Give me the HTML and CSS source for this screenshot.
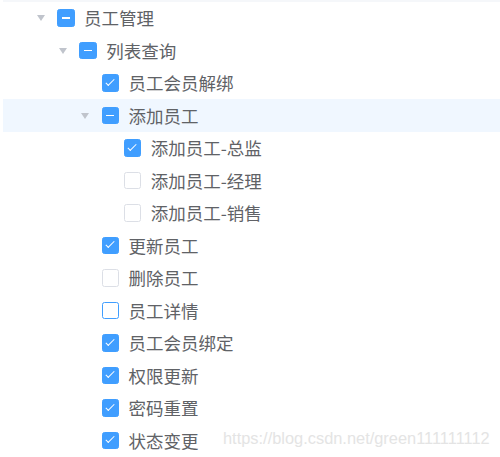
FILE: index.html
```html
<!DOCTYPE html>
<html lang="zh-CN">
<head>
<meta charset="utf-8">
<title>员工管理</title>
<link rel="stylesheet" href="styles.css">
</head>
<body>
<div class="tree">
  <div class="strip"></div>
  <div class="node lv1"><span class="caret"></span><span class="cb ind"></span><span class="label">员工管理</span></div>
  <div class="node lv2"><span class="caret"></span><span class="cb ind"></span><span class="label">列表查询</span></div>
  <div class="node lv3"><span class="caret none"></span><span class="cb on"></span><span class="label">员工会员解绑</span></div>
  <div class="node lv3 current"><span class="caret"></span><span class="cb ind"></span><span class="label">添加员工</span></div>
  <div class="node lv4"><span class="caret none"></span><span class="cb on"></span><span class="label">添加员工-总监</span></div>
  <div class="node lv4"><span class="caret none"></span><span class="cb"></span><span class="label">添加员工-经理</span></div>
  <div class="node lv4"><span class="caret none"></span><span class="cb"></span><span class="label">添加员工-销售</span></div>
  <div class="node lv3"><span class="caret none"></span><span class="cb on"></span><span class="label">更新员工</span></div>
  <div class="node lv3"><span class="caret none"></span><span class="cb"></span><span class="label">删除员工</span></div>
  <div class="node lv3"><span class="caret none"></span><span class="cb focus"></span><span class="label">员工详情</span></div>
  <div class="node lv3"><span class="caret none"></span><span class="cb on"></span><span class="label">员工会员绑定</span></div>
  <div class="node lv3"><span class="caret none"></span><span class="cb on"></span><span class="label">权限更新</span></div>
  <div class="node lv3"><span class="caret none"></span><span class="cb on"></span><span class="label">密码重置</span></div>
  <div class="node lv3"><span class="caret none"></span><span class="cb on"></span><span class="label">状态变更</span></div>
</div>
<div class="watermark">https://blog.csdn.net/green111111112</div>
</body>
</html>
```
FILE: styles.css
```css
html, body {
  margin: 0;
  padding: 0;
  background: #ffffff;
}
body {
  width: 500px;
  height: 457px;
  overflow: hidden;
  position: relative;
  font-family: "Noto Sans CJK SC", "Noto Sans", sans-serif;
}
.tree {
  margin-left: 3px;
}
.strip {
  height: 1.5px;
  background: #f5f7fa;
}
.node {
  display: flex;
  align-items: center;
  height: 32.5px;
  color: #606266;
  font-size: 17.5px;
}
.node.current {
  background: #f0f7ff;
}
.lv1 { padding-left: 21px; }
.lv2 { padding-left: 43.3px; }
.lv3 { padding-left: 65.6px; }
.lv4 { padding-left: 87.8px; }
.caret {
  width: 33px;
  height: 32.5px;
  display: flex;
  align-items: center;
  justify-content: center;
  flex: none;
}
.caret::before {
  content: "";
  display: block;
  width: 0;
  height: 0;
  border-left: 4.5px solid transparent;
  border-right: 4.5px solid transparent;
  border-top: 6px solid #c0c4cc;
  margin-top: 1px;
}
.caret.none::before {
  display: none;
}
.cb {
  position: relative;
  box-sizing: border-box;
  width: 17.5px;
  height: 17.5px;
  border: 1.2px solid #dcdfe6;
  border-radius: 2.5px;
  background: #ffffff;
  flex: none;
  margin-right: 9.5px;
}
.cb.focus {
  border-color: #409eff;
}
.cb.on, .cb.ind {
  background: #409eff;
  border-color: #409eff;
}
.cb.on::after {
  content: "";
  position: absolute;
  box-sizing: content-box;
  left: 5.3px;
  top: 1.6px;
  width: 3.4px;
  height: 8px;
  border-right: 1.3px solid #ffffff;
  border-bottom: 1.3px solid #ffffff;
  transform: rotate(45deg);
}
.cb.ind::before {
  content: "";
  position: absolute;
  left: 3.9px;
  right: 3.9px;
  top: 7.1px;
  height: 1.8px;
  background: #ffffff;
}
.label {
  line-height: 1;
  white-space: nowrap;
}
.watermark {
  position: absolute;
  left: 223px;
  top: 430px;
  font-family: "Liberation Sans", Arial, sans-serif;
  font-size: 16.4px;
  line-height: 1;
  color: #e4e4e4;
  white-space: nowrap;
}
```
